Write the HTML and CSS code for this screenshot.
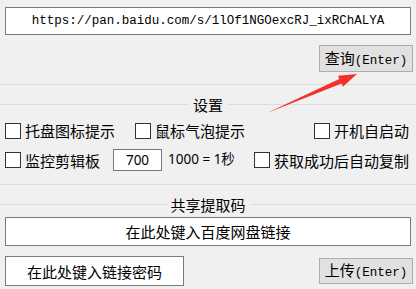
FILE: index.html
```html
<!DOCTYPE html>
<html>
<head>
    <title>百度网盘提取码</title>
    <link rel="stylesheet" href="styles.css">
</head>
<body>
    <div class="window">
        <!-- link box -->
        <div class="url-box">https://pan.baidu.com/s/1lOf1NGOexcRJ_ixRChALYA</div>

        <div class="query-row">
            <div class="btn"><span>查询<span class="latin">(Enter)</span></span></div>
        </div>

        <div class="sep"></div>

        <!-- settings group -->
        <div class="legend"><span>设置</span></div>

        <div class="row row-one">
            <label class="check"><span class="box"></span>托盘图标提示</label>
            <label class="check item-two"><span class="box"></span>鼠标气泡提示</label>
            <label class="check push-right"><span class="box"></span>开机自启动</label>
        </div>

        <div class="row row-two">
            <label class="check"><span class="box"></span>监控剪辑板</label>
            <div class="num-box">700</div>
            <span class="hint">1000 = 1秒</span>
            <label class="check push-right"><span class="box"></span>获取成功后自动复制</label>
        </div>

        <div class="sep sep-low"></div>

        <!-- share code group -->
        <div class="legend"><span>共享提取码</span></div>

        <div class="text-box wide">在此处键入百度网盘链接</div>

        <div class="bottom-row">
            <div class="text-box small">在此处键入链接密码</div>
            <div class="btn btn-upload"><span>上传<span class="latin">(Enter)</span></span></div>
        </div>
    </div>

    <!-- red arrow drawn over the window -->
    <svg class="arrow" width="416" height="289" viewBox="0 0 416 289">
        <polygon points="267,113 339.2,79 338.1,75.7 357,74 342.9,86.7 341.6,83.4" fill="#f2332d"/>
    </svg>
</body>
</html>
```

FILE: styles.css
```css
body {
    margin: 0;
    padding: 0;
    width: 416px;
    height: 289px;
    overflow: hidden;
    position: relative;
    background-color: #f0f0f0;
    font-family: "Noto Sans CJK SC", "Noto Sans", sans-serif;
    font-size: 15px;
    color: #000;
}

.window {
    padding-top: 7px;
}

.url-box {
    margin: 0 5px;
    height: 28px;
    box-sizing: border-box;
    border: 1px solid #7a7a7a;
    background: #fff;
    display: flex;
    align-items: center;
    justify-content: center;
    font-family: "Liberation Mono", monospace;
    font-size: 12.5px;
}

.query-row {
    display: flex;
    justify-content: flex-end;
    margin-top: 10px;
    padding-right: 3px;
}

/* Buttons */
.btn {
    width: 94px;
    height: 27px;
    box-sizing: border-box;
    border: 1px solid #adadad;
    background: #e1e1e1;
    display: flex;
    align-items: center;
    justify-content: center;
    line-height: 1;
}

.latin {
    font-family: "Liberation Mono", monospace;
    font-size: 12.5px;
}

.sep {
    height: 1px;
    background: #dcdcdc;
    margin-top: 12px;
}

.sep-low {
    margin-top: 13px;
}

/* Group titles with line through */
.legend {
    display: flex;
    align-items: center;
    height: 20px;
    margin-top: 9px;
}

.legend::before,
.legend::after {
    content: "";
    flex: 1;
    height: 1px;
    background: #dcdcdc;
}

.legend span {
    padding: 0 4px;
    line-height: 1;
}

/* Setting rows */
.row {
    display: flex;
    align-items: center;
    padding: 0 7px 0 5px;
}

.row-one {
    height: 21px;
    margin-top: 6px;
}

.row-two {
    height: 22px;
    margin-top: 8px;
}

.check {
    display: flex;
    align-items: center;
    gap: 4px;
    line-height: 1;
}

.box {
    width: 16px;
    height: 16px;
    box-sizing: border-box;
    border: 1px solid #333;
    background: #fff;
}

.item-two {
    margin-left: 20px;
}

.push-right {
    margin-left: auto;
}

.num-box {
    width: 49px;
    height: 22px;
    box-sizing: border-box;
    margin-left: 13px;
    border: 1px solid #7a7a7a;
    background: #fff;
    display: flex;
    align-items: center;
    justify-content: center;
    font-family: "Noto Sans", sans-serif;
    font-size: 13.5px;
}

.hint {
    margin-left: 6px;
    font-family: "Noto Sans", "Noto Sans CJK SC", sans-serif;
    font-size: 13.5px;
    line-height: 1;
    white-space: pre;
}

/* Text inputs */
.text-box {
    box-sizing: border-box;
    border: 1px solid #7a7a7a;
    background: #fff;
    display: flex;
    align-items: center;
    justify-content: center;
    line-height: 1;
}

.wide {
    margin: 3px 5px 0;
    height: 29px;
}

.bottom-row {
    display: flex;
    align-items: center;
    justify-content: space-between;
    margin-top: 10px;
    padding: 0 3px 0 5px;
}

.small {
    width: 179px;
    height: 30px;
}

.btn-upload {
    height: 26px;
}

.arrow {
    position: absolute;
    top: 0;
    left: 0;
}
```
